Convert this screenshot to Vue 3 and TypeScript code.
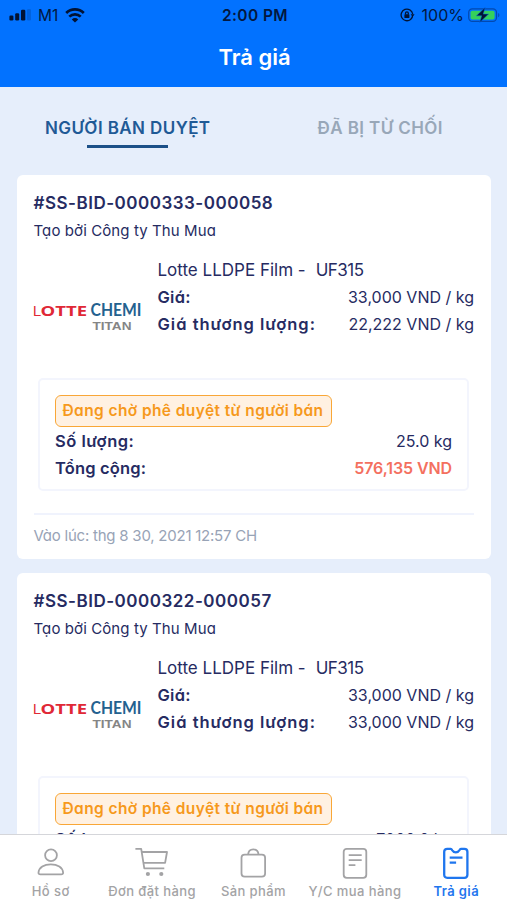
<script setup lang="ts">
interface Bid {
  code: string
  creator: string
  product: string
  grade: string
  price: string
  negotiated: string
  status: string
  quantity: string
  total: string
  createdAt: string
}

interface NavItem {
  key: string
  label: string
  active: boolean
}

const bids: Bid[] = [
  {
    code: '#SS-BID-0000333-000058',
    creator: 'Tạo bởi Công ty Thu Mua',
    product: 'Lotte LLDPE Film -',
    grade: 'UF315',
    price: '33,000 VND / kg',
    negotiated: '22,222 VND / kg',
    status: 'Đang chờ phê duyệt từ người bán',
    quantity: '25.0 kg',
    total: '576,135 VND',
    createdAt: 'Vào lúc: thg 8 30, 2021 12:57 CH',
  },
  {
    code: '#SS-BID-0000322-000057',
    creator: 'Tạo bởi Công ty Thu Mua',
    product: 'Lotte LLDPE Film -',
    grade: 'UF315',
    price: '33,000 VND / kg',
    negotiated: '33,000 VND / kg',
    status: 'Đang chờ phê duyệt từ người bán',
    quantity: '7000.0 kg',
    total: '',
    createdAt: '',
  },
]

const navItems: NavItem[] = [
  { key: 'profile', label: 'Hồ sơ', active: false },
  { key: 'orders', label: 'Đơn đặt hàng', active: false },
  { key: 'products', label: 'Sản phẩm', active: false },
  { key: 'requests', label: 'Y/C mua hàng', active: false },
  { key: 'bids', label: 'Trả giá', active: true },
]
</script>

<template>
  <div class="screen">
    <header class="header">
      <div class="status">
        <div class="status-left">
          <svg class="signal" width="22" height="12" viewBox="0 0 22 12">
            <rect x="0.4" y="6.6" width="4" height="4.9" rx="1.2" />
            <rect x="6.2" y="4.2" width="4" height="7.3" rx="1.2" />
            <rect x="12" y="0.8" width="4.3" height="10.7" rx="1.2" />
            <rect x="18" y="0" width="4" height="11.5" rx="1.2" opacity=".16" />
          </svg>
          <span class="carrier">M1</span>
          <svg class="wifi" width="20" height="15" viewBox="0 0 20 15">
            <path d="M1.200 5a12.600 12.600 0 0 1 17.600 0" />
            <path d="M4.300 8.600a8.200 8.200 0 0 1 11.400 0" />
            <path class="wifi-dot" d="M10 14.500 6.800 11.400a4.500 4.500 0 0 1 6.400 0z" />
          </svg>
        </div>
        <span class="clock">2:00 PM</span>
        <div class="status-right">
          <svg class="lock" width="15" height="14" viewBox="0 0 15 14">
            <path d="M12.700 7A5.800 5.800 0 1 1 9.800 1.900" />
            <path d="M9.800 1.900A5.800 5.800 0 0 1 12.700 6" />
            <path class="fill" d="M10.600 6.200h4l-2 2.600z" />
            <rect class="fill" x="4.400" y="6.300" width="5" height="3.800" rx=".6" />
            <path d="M5.500 6.400V5.200a1.400 1.400 0 0 1 2.800 0v1.200" />
          </svg>
          <span class="percent">100%</span>
          <svg class="battery" width="33" height="16" viewBox="0 0 33 16">
            <rect x=".7" y="1.800" width="27.800" height="12.600" rx="3.600" fill="none" stroke="#0349b0" stroke-width="1.200" />
            <path d="M30.200 6v4.300c1.600-.6 1.600-3.700 0-4.300z" fill="#0349b0" />
            <rect x="2.600" y="3.700" width="24" height="8.800" rx="1.900" fill="#35d15b" />
            <path d="M17.200.4 8.400 8.800h5.300L11.700 15.400l8.900-8.300h-5.400z" fill="#021333" stroke="#0568e8" stroke-width=".5" />
          </svg>
        </div>
      </div>
      <h1 class="title">Trả giá</h1>
    </header>

    <div class="tabs">
      <div class="tab tab-active"><span>NGƯỜI BÁN DUYỆT</span></div>
      <div class="tab"><span>ĐÃ BỊ TỪ CHỐI</span></div>
    </div>

    <main class="list">
      <article v-for="bid in bids" :key="bid.code" class="card">
        <h2 class="code">{{ bid.code }}</h2>
        <p class="creator">{{ bid.creator }}</p>

        <div class="summary">
          <svg class="logo" width="110" height="30" viewBox="0 0 110 30">
            <text x="-.6" y="13" class="logo-l" textLength="8.600" lengthAdjust="spacingAndGlyphs">L</text>
            <text x="7.500" y="13" class="logo-otte" textLength="46.500" lengthAdjust="spacingAndGlyphs">OTTE</text>
            <text x="57.500" y="13.200" class="logo-chemi" textLength="51" lengthAdjust="spacingAndGlyphs">CHEMI</text>
            <text x="59.500" y="26.600" class="logo-titan" textLength="39" lengthAdjust="spacingAndGlyphs">TITAN</text>
          </svg>
          <div class="facts">
            <div class="product"><span>{{ bid.product }}</span><span class="grade">{{ bid.grade }}</span></div>
            <div class="row"><span class="label price">Giá:</span><span class="value">{{ bid.price }}</span></div>
            <div class="row"><span class="label negotiated">Giá thương lượng:</span><span class="value">{{ bid.negotiated }}</span></div>
          </div>
        </div>

        <section class="box">
          <div class="badge">{{ bid.status }}</div>
          <div class="row"><span class="label quantity">Số lượng:</span><span class="value">{{ bid.quantity }}</span></div>
          <div class="row"><span class="label">Tổng cộng:</span><span class="total">{{ bid.total }}</span></div>
        </section>

        <footer class="time">{{ bid.createdAt }}</footer>
      </article>
    </main>

    <nav class="nav">
      <div v-for="item in navItems" :key="item.key" class="nav-item" :class="{ active: item.active }">
        <svg class="nav-icon" width="34" height="34" viewBox="0 0 34 34">
          <template v-if="item.key === 'profile'">
            <circle cx="17" cy="9.200" r="5.900" />
            <path d="M6.400 28.400h20.800c1.300 0 2-.6 1.900-1.900-.4-4.900-5.600-8.200-12.300-8.200s-11.900 3.300-12.300 8.200c-.1 1.300.6 1.900 1.900 1.900z" />
          </template>
          <template v-else-if="item.key === 'orders'">
            <path d="M.4 2.900h5.800l3.100 19.500h20" />
            <path d="M6.900 6h25.100l-1.900 10.900H8.800" />
            <circle class="dot" cx="12.900" cy="28" r="2.100" />
            <circle class="dot" cx="26.300" cy="28" r="2.100" />
          </template>
          <template v-else-if="item.key === 'products'">
            <rect x="5.500" y="8.600" width="23.600" height="22" rx="3.200" />
            <path d="M12.100 8.600C12.300 5.400 14.300 3.400 17.300 3.400s5 2 5.200 5.200" />
          </template>
          <template v-else-if="item.key === 'requests'">
            <rect x="5.700" y="2.800" width="22.600" height="29" rx="3" />
            <path d="M10.700 9.200h13M10.700 14.200h13M10.700 19.200h6.700" />
          </template>
          <template v-else>
            <path d="M8.200 2.800h3.500c.9 0 1.100.7 1.500 1.500.8 1.500 2.100 2.100 3.600 2.100s2.800-.6 3.600-2.100c.4-.8.6-1.500 1.500-1.500h3.500c1.900 0 3 1.100 3 3v23c0 1.900-1.100 3-3 3H8.200c-1.900 0-3-1.100-3-3v-23c0-1.900 1.100-3 3-3z" />
            <path d="M10.700 11.600h12.800M10.700 16.700h6.400" />
          </template>
        </svg>
        <span class="nav-label">{{ item.label }}</span>
      </div>
    </nav>
  </div>
</template>

<style>
body {
  margin: 0;
  background: #e6eefb;
}
</style>

<style scoped>
.screen {
  display: flex;
  flex-direction: column;
  height: 900px;
  overflow: hidden;
  background: #e6eefb;
  color: #262b62;
  font-family: Inter, "Liberation Sans", sans-serif;
}

.header {
  flex: none;
  box-sizing: border-box;
  height: 87px;
  background: #0272ff;
}

.status {
  display: grid;
  grid-template-columns: 1fr auto 1fr;
  align-items: center;
  height: 30px;
  padding: 0 6px 0 9px;
  color: #03183f;
  font-size: 15.5px;
}

.status-left,
.status-right {
  display: flex;
  align-items: center;
}

.status-right {
  justify-content: flex-end;
}

.signal {
  fill: #021333;
}

.carrier {
  margin-left: 7px;
}

.wifi {
  margin-left: 7px;
  fill: none;
  stroke: #021333;
  stroke-width: 2.7;
}

.wifi .wifi-dot {
  fill: #021333;
  stroke: none;
}

.clock {
  font-weight: 600;
  letter-spacing: 0.4px;
}

.lock {
  fill: none;
  stroke: #021333;
  stroke-width: 1.3;
}

.lock .fill {
  fill: #021333;
  stroke: none;
}

.percent {
  margin: 0 4px 0 7px;
  font-size: 16px;
}

.title {
  margin: 12px 0 0;
  padding-left: 2px;
  color: #fff;
  font-size: 22px;
  font-weight: 600;
  line-height: 31px;
  text-align: center;
}

.tabs {
  display: grid;
  flex: none;
  grid-template-columns: 1fr 1fr;
  height: 88px;
}

.tab {
  display: flex;
  flex-direction: column;
  align-items: center;
  padding-top: 28px;
  color: #98a7b8;
  font-size: 17px;
  font-weight: 600;
  letter-spacing: 0.4px;
  line-height: 26px;
}

.tab-active {
  padding-left: 2px;
  color: #1f5a96;
}

.tab-active::after {
  width: 81px;
  height: 3px;
  margin-top: 4px;
  background: #1c5088;
  content: "";
}

.list {
  display: flex;
  flex: 1;
  flex-direction: column;
  gap: 14px;
  min-height: 0;
  padding: 0 16px 0 17px;
  overflow: hidden;
}

.card {
  box-sizing: border-box;
  flex: none;
  height: 384px;
  padding: 15px 17px 0 16.5px;
  border-radius: 6px;
  background: #fff;
  font-feature-settings: "cv11";
}

.code,
.creator {
  margin: 0;
  line-height: 27px;
  white-space: nowrap;
}

.code {
  font-size: 17px;
  font-weight: 600;
  letter-spacing: 0.5px;
}

.creator {
  font-size: 15px;
  letter-spacing: 0.1px;
}

.summary {
  display: flex;
  margin-top: 13px;
}

.logo {
  flex: none;
  width: 110px;
  margin: 46px 14.5px 0 -0.5px;
  overflow: visible;
  font-family: "Open Sans", sans-serif;
}

.logo-l,
.logo-otte {
  fill: #e02836;
  font-size: 15px;
}

.logo-otte {
  font-weight: 700;
}

.logo-chemi {
  fill: #23618f;
  font-family: Lato, sans-serif;
  font-size: 16.5px;
  font-weight: 700;
}

.logo-titan {
  fill: #858585;
  font-family: "Liberation Sans", sans-serif;
  font-size: 10.3px;
  font-weight: 700;
}

.facts {
  flex: 1;
}

.product {
  display: flex;
  gap: 10px;
  font-size: 17px;
  line-height: 27px;
  white-space: nowrap;
}

.grade {
  letter-spacing: -0.5px;
}

.row {
  display: flex;
  justify-content: space-between;
  font-size: 16px;
  line-height: 27px;
  white-space: nowrap;
}

.label {
  font-size: 16.5px;
  font-weight: 600;
  letter-spacing: 0.15px;
}

.price {
  letter-spacing: 0.25px;
}

.negotiated {
  letter-spacing: 1px;
}

.quantity {
  letter-spacing: 0.5px;
}

.total {
  color: #f4705f;
  font-weight: 600;
  letter-spacing: -0.1px;
}

.box {
  box-sizing: border-box;
  height: 113px;
  margin: 40px 5px 0 4.5px;
  padding: 15px 15px 0 15px;
  border: 2px solid #f3f5fd;
  border-radius: 5px;
}

.badge {
  display: inline-block;
  box-sizing: border-box;
  width: 277px;
  height: 32px;
  margin: 0 0 1px -0.5px;
  padding-left: 7px;
  border: 1.5px solid #f9a737;
  border-radius: 6px;
  background: #fff1e2;
  color: #f6991c;
  font-size: 15.5px;
  font-weight: 600;
  letter-spacing: 0.4px;
  line-height: 30px;
  vertical-align: top;
  white-space: nowrap;
}

.time {
  margin-top: 22px;
  padding-top: 7px;
  border-top: 2px solid #f0f3fd;
  color: #98a3b6;
  font-size: 15px;
  letter-spacing: -0.23px;
  line-height: 27px;
  white-space: nowrap;
}

.nav {
  display: grid;
  flex: none;
  grid-template-columns: repeat(5, 1fr);
  box-sizing: border-box;
  height: 66px;
  border-top: 1px solid #d5d6da;
  background: #fff;
}

.nav-item {
  display: flex;
  flex-direction: column;
  align-items: center;
  padding-top: 11px;
  color: #a3a3a5;
}

.nav-icon {
  fill: none;
  stroke: currentColor;
  stroke-width: 1.8;
  stroke-linejoin: round;
}

.nav-icon .dot {
  fill: currentColor;
  stroke: none;
}

.nav-label {
  margin-top: 1px;
  font-size: 13px;
  font-weight: 500;
  letter-spacing: 0.4px;
  line-height: 20px;
  white-space: nowrap;
}

.active {
  color: #1f76ee;
}

.active .nav-icon {
  stroke-width: 2.3;
}

.active .nav-label {
  font-weight: 600;
}
</style>
